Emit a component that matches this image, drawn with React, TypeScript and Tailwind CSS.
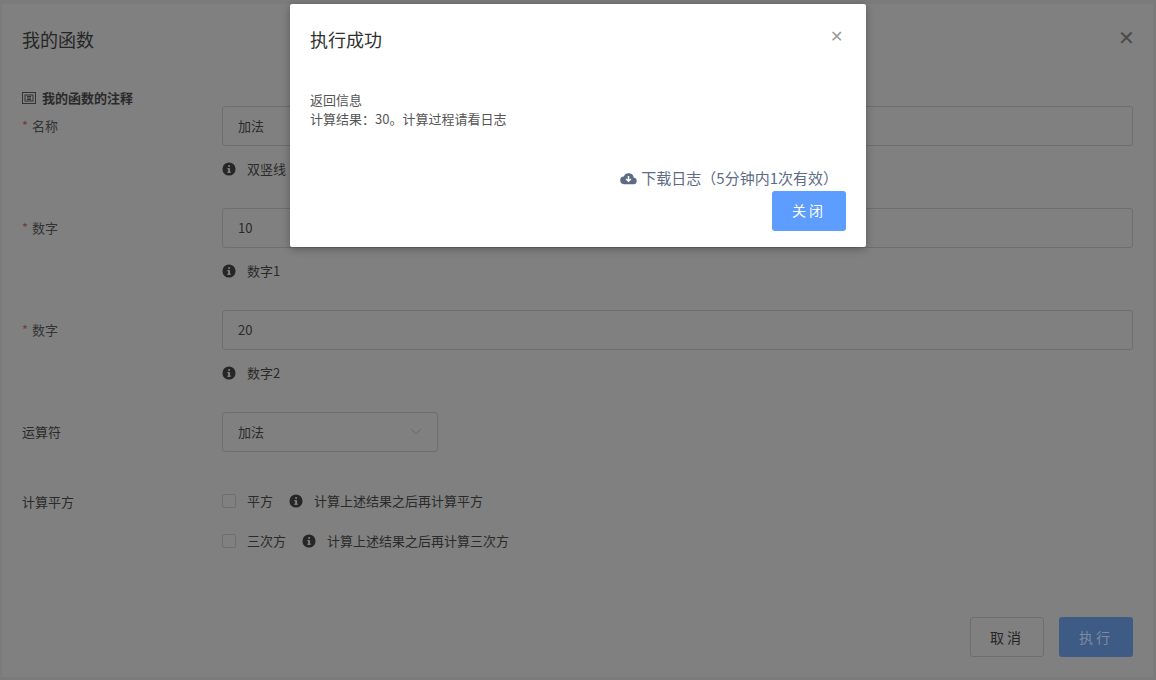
import React from 'react';

const font = { fontFamily: '"Noto Sans CJK SC", "Liberation Sans", sans-serif' };

const Info = () => (
  <svg width="14" height="14" viewBox="0 0 16 16" className="shrink-0">
    <circle cx="8" cy="8" r="7.5" fill="#262626" />
    <rect x="7" y="7" width="2.2" height="5" fill="#808080" />
    <rect x="6" y="11" width="4" height="1.4" fill="#808080" />
    <rect x="6" y="7" width="2" height="1.3" fill="#808080" />
    <circle cx="8.1" cy="4.6" r="1.2" fill="#808080" />
  </svg>
);

const Field = ({ label, value, help }: { label: string; value: string; help: string }) => (
  <div className="flex h-[102px]">
    <div className="w-[200px] pt-[10px] text-[13px] text-[#333]">
      <span className="text-[#7a3a3a] mr-1">*</span>{label}
    </div>
    <div className="flex-1">
      <div className="h-10 border border-[#6e6e6e] rounded-[3px] flex items-center px-[15px] text-[13px] text-[#2a2a2a]">{value}</div>
      <div className="flex items-center gap-[11px] mt-[13px] text-[13px] text-[#2a2a2a]"><Info />{help}</div>
    </div>
  </div>
);

export default function App() {
  return (
    <div className="relative w-[1156px] h-[680px] bg-[#7b7b7b] overflow-hidden" style={font}>
      <div className="absolute left-[2px] top-[4px] w-[1151px] h-[673px] bg-[#808080] px-5 flex flex-col">
        <div className="h-[66px] flex items-center justify-between text-[18px] text-[#262626]">
          <span className="mt-1">我的函数</span>
          <span className="text-[#4a4a4a] text-[20px] font-light mr-[-2px]">✕</span>
        </div>
        <div className="pt-5 flex items-center gap-[6px] text-[13px] font-bold text-[#2a2a2a] h-[36px]">
          <svg width="14" height="12" viewBox="0 0 14 12"><rect x="0.5" y="0.5" width="13" height="11" fill="none" stroke="#333" /><rect x="3" y="3" width="8" height="6" fill="none" stroke="#333" /><line x1="5" y1="4.5" x2="9" y2="4.5" stroke="#333" /><line x1="5" y1="6" x2="9" y2="6" stroke="#333" /><line x1="5" y1="7.5" x2="9" y2="7.5" stroke="#333" /></svg>
          我的函数的注释
        </div>
        <Field label="名称" value="加法" help="双竖线" />
        <Field label="数字" value="10" help="数字1" />
        <Field label="数字" value="20" help="数字2" />
        <div className="flex h-[62px]">
          <div className="w-[200px] pt-[10px] text-[13px] text-[#2a2a2a]">运算符</div>
          <div className="w-[216px] h-10 border border-[#6e6e6e] rounded-[3px] flex items-center justify-between px-[15px] text-[13px] text-[#2a2a2a]">
            加法
            <svg width="12" height="8" viewBox="0 0 12 8"><path d="M1 1l5 5 5-5" fill="none" stroke="#6a6a6a" /></svg>
          </div>
        </div>
        <div className="flex text-[13px] text-[#2a2a2a]">
          <div className="w-[200px] pt-[18px]">计算平方</div>
          <div className="flex flex-col gap-[26px] pt-[20px]">
            {[['平方', '计算上述结果之后再计算平方'], ['三次方', '计算上述结果之后再计算三次方']].map(([a, b]) => (
              <div key={a} className="flex items-center h-[14px]">
                <span className="w-[14px] h-[14px] border border-[#6e6e6e] rounded-[2px] mr-[11px]" />
                <span className="mr-[16px]">{a}</span>
                <Info />
                <span className="ml-[11px]">{b}</span>
              </div>
            ))}
          </div>
        </div>
        <div className="mt-auto mb-[20px] flex justify-end gap-[15px]">
          <div className="w-[74px] h-10 border border-[#6e6e6e] rounded-[3px] flex items-center justify-center text-[14px] text-[#262626] tracking-[3px]">取消</div>
          <div className="w-[74px] h-10 bg-[#3d5b85] rounded-[3px] flex items-center justify-center text-[14px] text-[#7d8aa0] tracking-[3px]">执行</div>
        </div>
      </div>

      <div className="absolute left-[290px] top-[4px] w-[576px] h-[243px] bg-white shadow-[0_2px_8px_rgba(0,0,0,0.3)] rounded-[2px] flex flex-col px-5">
        <div className="h-[66px] flex items-center justify-between">
          <span className="text-[18px] text-[#303030] mt-1">执行成功</span>
          <span className="text-[#9a9a9a] text-[16px] font-light mt-[-4px] mr-[3px]">✕</span>
        </div>
        <div className="pt-[20px] text-[13px] leading-[19px] text-[#555]">
          <div>返回信息</div>
          <div>计算结果：30。计算过程请看日志</div>
        </div>
        <div className="mt-[39px] flex justify-end items-center gap-1 text-[15px] text-[#5d6b85] pr-[8px]">
          <svg width="17" height="14" viewBox="0 0 18 14"><path d="M4.5 13.5a4 4 0 0 1-.5-8 5.5 5.5 0 0 1 10.6 1.2A3.4 3.4 0 0 1 14 13.5z" fill="#5d6b85" /><path d="M9 5v5M6.5 8l2.5 2.5L11.5 8" fill="none" stroke="white" strokeWidth="1.6" /></svg>
          下载日志（5分钟内1次有效）
        </div>
        <div className="flex justify-end mt-[1px]">
          <div className="w-[74px] h-10 bg-[#5c9dff] rounded-[3px] flex items-center justify-center text-[14px] text-white tracking-[3px]">关闭</div>
        </div>
      </div>
    </div>
  );
}
